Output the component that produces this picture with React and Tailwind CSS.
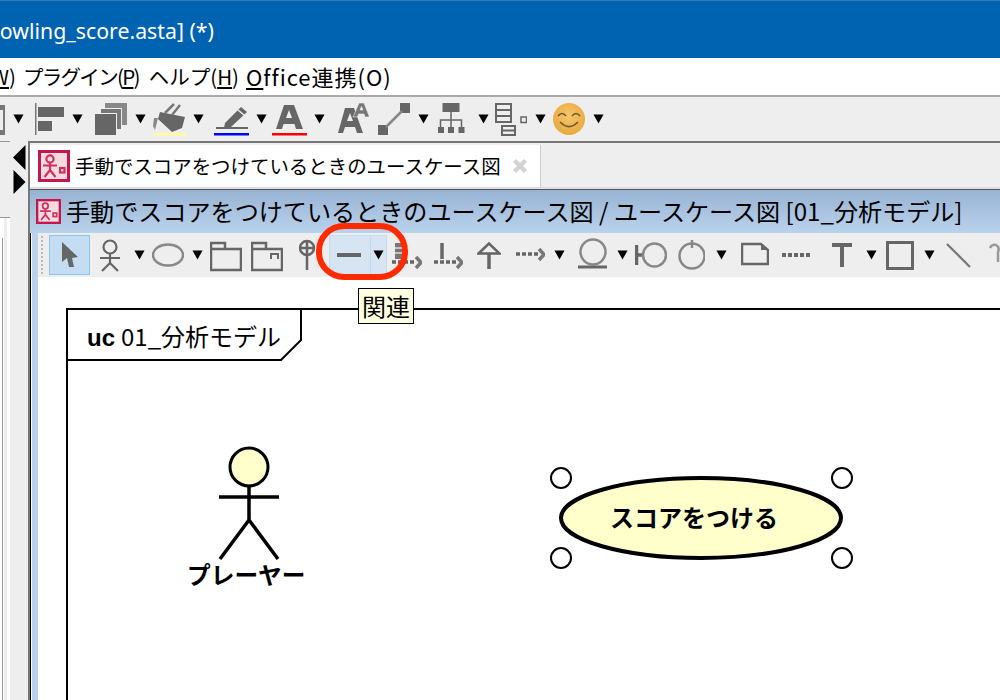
import React from 'react'

const cjk = { fontFamily: '"Noto Sans CJK JP", "Noto Sans", sans-serif' }

// small black dropdown triangle used everywhere in the toolbars
function Ar({ className = '' }) {
  return (
    <svg width="11" height="10" viewBox="0 0 11 10" className={`shrink-0 ${className}`}>
      <path d="M0.5 0.5H10.5L5.5 9.5Z" fill="#000" />
    </svg>
  )
}

// top row and diagram row icons share one height, x is local to the icon
function Ic({ w, className = '', children }) {
  return (
    <svg width={w} height="34" viewBox={`0 0 ${w} 34`} className={`shrink-0 ${className}`} fill="none">
      {children}
    </svg>
  )
}

function DiagramIcon({ size }) {
  return (
    <svg width={size} height={size} viewBox="0 0 32 32" className="shrink-0">
      <rect x="1.5" y="1.5" width="29" height="29" fill="#f7dbe3" stroke="#c2184b" strokeWidth="3" />
      <g stroke="#d0325f" strokeWidth="2.2" fill="none">
        <circle cx="12" cy="9" r="3.6" />
        <path d="M5 15.5H19M12 13V20M12 20L6.5 27M12 20L17.5 27" />
        <rect x="22" y="18" width="4.5" height="4.5" />
      </g>
    </svg>
  )
}

function TitleBar() {
  return (
    <div className="h-[58px] bg-[#0063b1] border-t border-[#2b7fc1] overflow-hidden flex items-center shrink-0">
      <span className="text-white text-[21.3px] whitespace-nowrap ml-[-14px] mt-[2px]" style={{ fontFamily: '"Noto Sans", sans-serif' }}>
        Bowling_score.asta] (*)
      </span>
    </div>
  )
}

function MenuBar() {
  return (
    <div className="h-[39px] bg-white border-b-2 border-[#aaa] flex items-center whitespace-nowrap text-[20.5px] text-black shrink-0 overflow-hidden" style={cjk}>
      <span className="ml-[-9px]"><span className="underline">W</span>)</span>
      <span className="ml-[7px] tracking-[-1.7px]">プラグイン(<span className="underline">P</span>)</span>
      <span className="ml-[10px]">ヘルプ(<span className="underline">H</span>)</span>
      <span className="ml-[7px] text-[22px] tracking-[1px]"><span className="underline">O</span>ffice連携(O)</span>
    </div>
  )
}

function MainToolbar() {
  const g = '#666'
  return (
    <div className="h-[44px] bg-[#eeeeee] flex items-center shrink-0 overflow-hidden">
      <Ic w={5}><path d="M0 3H5V33H0Z M0 8H3V28H0Z" fill="#777" fillRule="evenodd" /></Ic>
      <Ar className="ml-[8px]" />
      <Ic w={29} className="ml-[11px]">
        <rect x="0" y="1" width="1.5" height="32" fill="#777" />
        <rect x="3" y="5" width="26" height="10" fill={g} />
        <rect x="3" y="19" width="14" height="10" fill={g} />
      </Ic>
      <Ar className="ml-[8px]" />
      <Ic w={32} className="ml-[12px]">
        <rect x="10" y="1" width="22" height="22" fill="#888" />
        <rect x="5" y="6" width="22" height="22" fill="#eee" />
        <rect x="6" y="7" width="20" height="20" fill="#777" />
        <rect x="0" y="11" width="22" height="22" fill="#eee" />
        <rect x="0" y="12" width="21" height="21" fill={g} />
      </Ic>
      <Ar className="ml-[8px]" />
      <Ic w={34} className="ml-[6px]">
        <path d="M8 10L33 15L30 26L20 30L6 17Z" fill={g} />
        <path d="M2 16H6L3 28L1 24Z" fill="#888" />
        <path d="M13 11L22 2M20 13L28 3" stroke="#777" strokeWidth="2.5" />
        <rect x="1" y="31" width="33" height="2.5" fill="#ffff99" />
      </Ic>
      <Ar className="ml-[7px]" />
      <Ic w={35} className="ml-[10px]">
        <path d="M11 21L27 5L33 10L17 25L10 26Z" fill={g} />
        <path d="M24 8L30 13" stroke="#eee" strokeWidth="1.5" />
        <rect x="2" y="25" width="32" height="2" fill={g} />
        <rect x="0" y="31" width="35" height="2.5" fill="#0000ff" />
      </Ic>
      <Ar className="ml-[7px]" />
      <Ic w={35} className="ml-[5px]">
        <path d="M12 3H22L31 27H24L22.5 22H11.5L10 27H4Z M14 16H20L17 8Z" fill={g} fillRule="evenodd" />
        <rect x="0" y="31" width="35" height="2.5" fill="#ff0000" />
      </Ic>
      <Ar className="ml-[7px]" />
      <Ic w={31} className="ml-[13px]">
        <path d="M7 6H16L25 31H19L17 25H7L5 31H0Z M9 19H15L12 11Z" fill={g} fillRule="evenodd" />
        <path d="M21 1H26L31.5 15H27L26 12H20.5L19.5 15H15Z M22 8H25L23.5 4.5Z" fill="#777" fillRule="evenodd" stroke="#eee" strokeWidth="0.6" />
      </Ic>
      <Ic w={32} className="ml-[9px]">
        <rect x="0" y="23" width="10" height="10" fill={g} />
        <rect x="22" y="1" width="10" height="10" fill={g} />
        <path d="M8 25L24 9" stroke="#888" strokeWidth="2.5" />
      </Ic>
      <Ar className="ml-[8px]" />
      <Ic w={27} className="ml-[9px]">
        <rect x="4.5" y="1" width="17" height="9" fill={g} />
        <path d="M13 10V25M2.5 25V18H23.5V25" stroke={g} strokeWidth="1.5" />
        <rect x="0" y="25" width="6" height="6" fill={g} />
        <rect x="10" y="25" width="6" height="6" fill={g} />
        <rect x="20.5" y="25" width="6" height="6" fill={g} />
      </Ic>
      <Ar className="ml-[13px]" />
      <Ic w={32} className="ml-[6px]">
        <rect x="1" y="2" width="15" height="18" fill="none" stroke={g} strokeWidth="2" />
        <path d="M1 8H16M1 14H16" stroke={g} strokeWidth="2" />
        <rect x="7" y="24" width="13" height="9" fill="none" stroke={g} strokeWidth="2" />
        <path d="M7 28.5H20" stroke={g} strokeWidth="2" />
        <rect x="26" y="15" width="5.5" height="5.5" fill="none" stroke={g} strokeWidth="1.5" />
      </Ic>
      <Ar className="ml-[8px]" />
      <svg width="32" height="32" viewBox="0 0 32 32" className="shrink-0 ml-[7px]" fill="none">
        <defs>
          <radialGradient id="smile" cx="0.5" cy="0.4" r="0.6">
            <stop offset="0" stopColor="#f6c56c" />
            <stop offset="1" stopColor="#e9a93e" />
          </radialGradient>
        </defs>
        <circle cx="16" cy="16" r="16" fill="url(#smile)" />
        <path d="M5 13Q9 8 13 13M19 13Q23 8 27 13M7 19Q16 28 25 19" stroke="#6e5a32" strokeWidth="1.7" />
      </svg>
      <Ar className="ml-[8px]" />
    </div>
  )
}

function LeftStrip() {
  return (
    <div className="w-[28px] shrink-0 bg-[#eeeeee] flex relative">
      <div className="w-[10px] shrink-0 flex flex-col">
        <div className="h-[76px] bg-[#eeeeee] border-t border-[#999]" />
        <div className="flex-1 flex bg-white border-t border-[#999]">
          <div className="w-[2px] mt-[20px] bg-white" />
          <div className="w-px mt-[20px] bg-[#999]" />
          <div className="w-px bg-white" />
          <div className="w-[3px] bg-[#eeeeee]" />
          <div className="w-[3px] bg-white" />
        </div>
      </div>
      <div className="flex-1 flex flex-col items-center pt-[4px]">
        <svg width="13" height="26" viewBox="0 0 13 26" className="ml-0"><path d="M12.5 0V25L0 12.5Z" fill="#000" /></svg>
        <svg width="13" height="24" viewBox="0 0 13 24" className="ml-0 mt-[-1px]"><path d="M0.5 0V24L12.5 12Z" fill="#000" /></svg>
      </div>
    </div>
  )
}

function TabRow() {
  return (
    <div className="h-[46px] bg-[#eeeeee] flex shrink-0 border-b-2 border-[#ddd]" style={cjk}>
      <div className="w-[511px] mt-[2px] mb-0 bg-white border-r border-[#ccc] flex items-center">
        <div className="ml-[8px]"><DiagramIcon size={32} /></div>
        <span className="ml-[5px] text-[19.45px] text-black whitespace-nowrap">手動でスコアをつけているときのユースケース図</span>
        <svg width="16" height="16" viewBox="0 0 16 16" className="ml-[11px] shrink-0">
          <path d="M2.5 2.5L13.5 13.5M13.5 2.5L2.5 13.5" stroke="#d4d4d4" strokeWidth="4.5" />
        </svg>
      </div>
    </div>
  )
}

function InnerTitle() {
  return (
    <div className="h-[44px] bg-gradient-to-b from-[#98b2d3] to-[#bad3ec] border-t border-[#555] flex items-center whitespace-nowrap overflow-hidden shrink-0" style={cjk}>
      <div className="ml-[6px]"><DiagramIcon size={25} /></div>
      <span className="ml-[5px] text-[24.1px] text-black">手動でスコアをつけているときのユースケース図 / ユースケース図 [01_分析モデル]</span>
    </div>
  )
}

function DiagramToolbar() {
  const g = '#666'
  return (
    <div className="h-[44px] bg-[#eeeeee] flex items-center overflow-hidden shrink-0">
      <div className="ml-[3px] w-[3px] h-[38px] border-l-2 border-dotted border-[#bbb]" />
      <div className="ml-[6px] w-[41px] h-[40px] bg-[#c4ddf3] border border-[#8cc4f2] flex items-center justify-center shrink-0">
        <svg width="20" height="28" viewBox="0 0 20 28"><path d="M2 1L2 21L7 17L9 26L14 26L12 17L18 16Z" fill="#666" /></svg>
      </div>
      <Ic w={20} className="ml-[10px]">
        <circle cx="10" cy="9" r="6.5" stroke={g} strokeWidth="2.2" />
        <path d="M0 20H20M10 15V25M10 25L2 33M10 25L18 33" stroke={g} strokeWidth="2.2" />
      </Ic>
      <Ar className="ml-[14px]" />
      <Ic w={32} className="ml-[7px]">
        <ellipse cx="16" cy="17" rx="15" ry="10.5" stroke="#888" strokeWidth="2.5" />
      </Ic>
      <Ar className="ml-[8px]" />
      <Ic w={32} className="ml-[7px]">
        <path d="M1 32V5H15V11H31V32Z M15 11H1" stroke={g} strokeWidth="2.5" />
      </Ic>
      <Ic w={32} className="ml-[9px]">
        <path d="M1 32V5H15V11H31V32Z M15 11H1" stroke={g} strokeWidth="2.5" />
        <path d="M20 21V16H27V21" stroke={g} strokeWidth="2" />
      </Ic>
      <Ic w={16} className="ml-[16px]">
        <circle cx="8" cy="10" r="7" stroke={g} strokeWidth="2.5" />
        <path d="M8 3V32M1 10H15" stroke={g} strokeWidth="2.5" />
      </Ic>
      <div className="ml-[14px] w-[58px] h-[40px] bg-[#d7e5f2] border border-[#c0dcf2] flex items-center shrink-0">
        <div className="ml-[7px] w-[24px] h-[4px] bg-[#666] shrink-0" />
        <div className="ml-[9px] w-px h-full bg-[#c0dcf2] shrink-0" />
        <Ar className="ml-[2px]" />
      </div>
      <Ic w={30} className="ml-[5px]">
        <rect x="3" y="5" width="10" height="16" fill="#777" />
        <path d="M3 10H13M3 15H13" stroke="#ddd" strokeWidth="1.5" />
        <path d="M0 24H4M6 24H10M12 24H16M18 24H22" stroke={g} strokeWidth="3.5" />
        <path d="M24 19L29 24.5L24 30" stroke="#777" strokeWidth="3.5" />
      </Ic>
      <Ic w={29} className="ml-[12px]">
        <path d="M8 5V21" stroke={g} strokeWidth="3.5" />
        <path d="M0 24H4M6 24H10M12 24H16M18 24H22" stroke={g} strokeWidth="3.5" />
        <path d="M23 19L28 24.5L23 30" stroke="#777" strokeWidth="3.5" />
      </Ic>
      <Ic w={24} className="ml-[14px]">
        <path d="M1.5 15.5L12 5.5L22.5 15.5Z" stroke={g} strokeWidth="2.5" />
        <path d="M12 15V31" stroke={g} strokeWidth="3.5" />
      </Ic>
      <Ic w={29} className="ml-[15px]">
        <path d="M0 16H4M6 16H10M12 16H16M18 16H22" stroke={g} strokeWidth="3.5" />
        <path d="M23 11L28 16.5L23 22" stroke="#777" strokeWidth="3.5" />
      </Ic>
      <Ar className="ml-[9px]" />
      <Ic w={29} className="ml-[13px]">
        <circle cx="15" cy="14" r="12.5" stroke="#888" strokeWidth="2.5" />
        <path d="M0 29H29" stroke={g} strokeWidth="3" />
      </Ic>
      <Ar className="ml-[10px]" />
      <Ic w={32} className="ml-[7px]">
        <path d="M1.5 7V27" stroke={g} strokeWidth="3.5" />
        <path d="M1.5 17H9" stroke={g} strokeWidth="3.5" />
        <circle cx="19.5" cy="17" r="11.5" stroke="#888" strokeWidth="2.5" />
      </Ic>
      <Ic w={27} className="ml-[11px]">
        <circle cx="14" cy="18" r="12.5" stroke="#888" strokeWidth="2.5" />
        <path d="M14 2V10" stroke="#888" strokeWidth="2.5" />
      </Ic>
      <Ar className="ml-[11px]" />
      <Ic w={28} className="ml-[14px]">
        <path d="M1 6H20L27 12V26H1Z" stroke={g} strokeWidth="2.5" />
        <path d="M20 6V12H27Z" fill={g} />
      </Ic>
      <Ic w={28} className="ml-[13px]">
        <path d="M0 17H28" stroke={g} strokeWidth="4" strokeDasharray="4 2" />
      </Ic>
      <Ic w={20} className="ml-[22px]">
        <path d="M0 5H20V9H12V29H8V9H0Z" fill={g} />
      </Ic>
      <Ar className="ml-[14px]" />
      <Ic w={28} className="ml-[9px]">
        <rect x="1.5" y="4.5" width="25" height="26" stroke={g} strokeWidth="3" />
      </Ic>
      <Ar className="ml-[10px]" />
      <Ic w={25} className="ml-[11px]">
        <path d="M1 6L24 29" stroke="#777" strokeWidth="2.2" />
      </Ic>
      <Ic w={16} className="ml-[18px]">
        <path d="M1 10Q3 6 7 7Q11 9 9 14V24" stroke="#999" strokeWidth="2.5" />
      </Ic>
    </div>
  )
}

// the diagram itself: items here sit at free canvas coordinates
function Canvas() {
  return (
    <div className="flex-1 relative bg-white overflow-hidden text-black" style={cjk}>
      <div className="absolute left-[28px] top-[31px] w-[1000px] h-[500px] border-l-2 border-t-2 border-black" />
      <svg width="240" height="56" viewBox="0 0 240 56" className="absolute left-[28px] top-[31px]" fill="none">
        <path d="M235 1V32L215 52H1" stroke="#000" strokeWidth="2" />
      </svg>
      <div className="absolute left-[49px] top-[42px] text-[24px] leading-[34px] whitespace-nowrap">
        <span className="font-bold" style={{ fontFamily: '"Liberation Sans", sans-serif' }}>uc</span>
        <span className="ml-[6px]">01_分析モデル</span>
      </div>

      <svg width="70" height="120" viewBox="0 0 70 120" className="absolute left-[175px] top-[168px]" fill="none">
        <circle cx="36" cy="22" r="19" fill="#ffffcc" stroke="#000" strokeWidth="3" />
        <path d="M6 52H66M36 41V75M36 75L7 114M36 75L65 114" stroke="#000" strokeWidth="3.5" />
      </svg>
      <div className="absolute left-[149px] top-[280px] font-bold text-[23.7px] leading-[34px] whitespace-nowrap">プレーヤー</div>

      <svg width="310" height="110" viewBox="0 0 310 110" className="absolute left-[508px] top-[186px]" fill="none">
        <ellipse cx="155" cy="55" rx="140" ry="40" fill="#ffffcc" stroke="#000" strokeWidth="4" />
        <circle cx="15" cy="15" r="10" fill="#fff" stroke="#000" strokeWidth="2" />
        <circle cx="296" cy="15" r="10" fill="#fff" stroke="#000" strokeWidth="2" />
        <circle cx="15" cy="95" r="10" fill="#fff" stroke="#000" strokeWidth="2" />
        <circle cx="296" cy="95" r="10" fill="#fff" stroke="#000" strokeWidth="2" />
      </svg>
      <div className="absolute left-[572px] top-[222px] font-bold text-[24px] leading-[36px] whitespace-nowrap">スコアをつける</div>

      <div className="absolute left-[320px] top-[11px] w-[56px] h-[36px] bg-[#ffffe1] border border-black flex items-center justify-center text-[24px] leading-none">関連</div>
    </div>
  )
}

export default function App() {
  return (
    <div className="w-[1000px] h-[700px] overflow-hidden flex flex-col relative bg-white">
      <TitleBar />
      <MenuBar />
      <MainToolbar />
      <div className="flex-1 flex min-h-0">
        <LeftStrip />
        <div className="flex-1 min-w-0 flex flex-col border-l-2 border-t-2 border-[#777]">
          <TabRow />
          <InnerTitle />
          <div className="flex-1 flex min-h-0">
            <div className="w-px bg-black shrink-0" />
            <div className="w-px bg-white shrink-0" />
            <div className="w-[6px] bg-[#bad2ea] shrink-0" />
            <div className="flex-1 min-w-0 flex flex-col">
              <DiagramToolbar />
              <Canvas />
            </div>
          </div>
        </div>
      </div>
      {/* red annotation ring over the association button */}
      <div className="absolute left-[316px] top-[223px] w-[92px] h-[57px] border-[6px] border-[#ff2a00] rounded-[28px]" />
    </div>
  )
}
